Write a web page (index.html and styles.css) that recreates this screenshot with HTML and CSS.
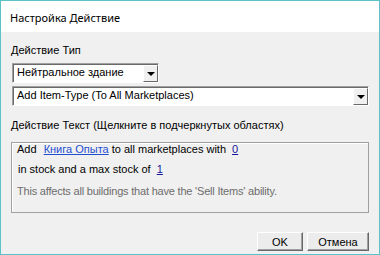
FILE: index.html
```html
<!DOCTYPE html>
<html lang="ru">
<head>
    <meta charset="UTF-8">
    <title>Настройка Действие</title>
    <link rel="stylesheet" href="styles.css">
</head>
<body>
    <div class="window">
        <div class="titlebar">Настройка Действие</div>

        <div class="content">
            <div class="label first">Действие Тип</div>

            <div class="combo short">
                <span class="combo-text">Нейтральное здание</span>
                <span class="combo-btn"><span class="arrow"></span></span>
            </div>

            <div class="combo wide">
                <span class="combo-text">Add Item-Type (To All Marketplaces)</span>
                <span class="combo-btn"><span class="arrow"></span></span>
            </div>

            <div class="label second">Действие Текст (Щелкните в подчеркнутых областях)</div>

            <div class="textbox">
                <div class="line">Add <a class="link">Книга Опыта</a>to all marketplaces with <a class="num">0</a></div>
                <div class="line two">in stock and a max stock of <a class="num">1</a></div>
                <div class="line note">This affects all buildings that have the 'Sell Items' ability.</div>
            </div>

            <div class="buttons">
                <button class="btn ok">OK</button>
                <button class="btn cancel">Отмена</button>
            </div>
        </div>
    </div>
</body>
</html>
```

FILE: styles.css
```css
body {
    margin: 0;
    background: #f0f0f0;
}

.window {
    width: 380px;
    height: 255px;
    box-sizing: border-box;
    border: 1px solid #5bc3c7;
    background: #f0f0f0;
    font-family: "Liberation Sans", Arial, sans-serif;
    font-size: 11px;
    color: #000;
    overflow: hidden;
}

.titlebar {
    height: 31px;
    background: #fff;
    padding: 2px 0 0 9px;
    box-sizing: border-box;
    line-height: 29px;
    font-family: "Noto Sans", sans-serif;
    font-size: 11px;
}

.content {
    padding: 0 10px;
}

.label {
    line-height: 13px;
    white-space: nowrap;
}

.label.first {
    margin-top: 12px;
}

.label.second {
    margin-top: 13px;
}

.combo {
    display: flex;
    height: 20px;
    box-sizing: border-box;
    background: #fff;
    border: 1px solid;
    border-color: #a0a0a0 #fff #fff #a0a0a0;
    box-shadow: inset 1px 1px 0 #696969;
}

.combo.short {
    width: 147px;
    margin: 6px 0 0 1px;
}

.combo.wide {
    margin: 3px 0 0 1px;
}

.combo-text {
    flex: 1;
    padding: 0 0 0 4px;
    line-height: 17px;
    white-space: nowrap;
}

.combo-btn {
    width: 15px;
    margin: 1px 0 0 0;
    background: #f0f0f0;
    border: 1px solid;
    border-color: #fff #696969 #696969 #fff;
    box-sizing: border-box;
    display: flex;
    align-items: center;
    justify-content: center;
}

.arrow {
    width: 0;
    height: 0;
    border-left: 4px solid transparent;
    border-right: 4px solid transparent;
    border-top: 4px solid #000;
    margin-top: 1px;
}

.textbox {
    margin-top: 10px;
    height: 71px;
    box-sizing: border-box;
    border: 1px solid #a0a0a0;
    box-shadow: inset 1px 1px 0 #fff;
    padding: 0 0 0 5px;
}

.line {
    line-height: 13px;
    white-space: nowrap;
}

.line.two {
    margin: 7px 0 0 1px;
}

.line.note {
    margin-top: 9px;
    color: #6d6d6d;
    letter-spacing: -0.2px;
}

.link {
    color: #1f4fd0;
    text-decoration: underline;
    margin: 0 3px 0 4px;
}

.num {
    color: #15159a;
    text-decoration: underline;
    margin-left: 3px;
}

.buttons {
    display: flex;
    justify-content: flex-end;
    gap: 4px;
    margin-top: 19px;
}

.btn {
    height: 19px;
    padding: 0;
    font-family: "Liberation Sans", Arial, sans-serif;
    font-size: 11px;
    color: #000;
    background: #ececec;
    border: 1px solid;
    border-color: #fff #696969 #696969 #fff;
    box-shadow: inset -1px -1px 0 #a0a0a0;
}

.btn.ok {
    width: 46px;
}

.btn.cancel {
    width: 62px;
}
```
